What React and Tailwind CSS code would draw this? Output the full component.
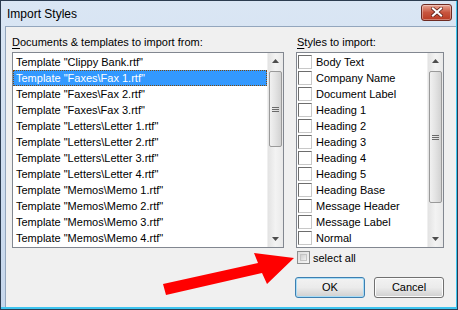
import React from "react";

const templates = [
  'Template "Clippy Bank.rtf"',
  'Template "Faxes\\Fax 1.rtf"',
  'Template "Faxes\\Fax 2.rtf"',
  'Template "Faxes\\Fax 3.rtf"',
  'Template "Letters\\Letter 1.rtf"',
  'Template "Letters\\Letter 2.rtf"',
  'Template "Letters\\Letter 3.rtf"',
  'Template "Letters\\Letter 4.rtf"',
  'Template "Memos\\Memo 1.rtf"',
  'Template "Memos\\Memo 2.rtf"',
  'Template "Memos\\Memo 3.rtf"',
  'Template "Memos\\Memo 4.rtf"',
];

const styles = [
  "Body Text",
  "Company Name",
  "Document Label",
  "Heading 1",
  "Heading 2",
  "Heading 3",
  "Heading 4",
  "Heading 5",
  "Heading Base",
  "Message Header",
  "Message Label",
  "Normal",
];

function Arrow({ up }) {
  return (
    <div className="h-[16px] flex items-center justify-center">
      <svg width="7" height="4" viewBox="0 0 7 4">
        {up ? (
          <polygon points="0,4 7,4 3.5,0" fill="#4d4d4d" />
        ) : (
          <polygon points="0,0 7,0 3.5,4" fill="#4d4d4d" />
        )}
      </svg>
    </div>
  );
}

function Scrollbar({ thumbTop, thumbHeight }) {
  return (
    <div className="w-[16px] h-full flex flex-col bg-gradient-to-r from-[#e3e3e3] via-[#f3f3f3] to-[#e9e9e9] border-l border-[#f0f0f0]">
      <Arrow up />
      <div className="flex-1 flex flex-col">
        <div style={{ height: thumbTop }} />
        <div
          className="mx-[1px] rounded-[2px] border border-[#9a9a9a] bg-gradient-to-r from-[#f1f1f1] via-[#e3e3e3] to-[#d2d2d2] flex items-center justify-center"
          style={{ height: thumbHeight }}
        >
          <div className="flex flex-col gap-[1px]">
            <div className="w-[7px] h-[1px] bg-[#6a6a6a]" />
            <div className="w-[7px] h-[1px] bg-[#6a6a6a]" />
            <div className="w-[7px] h-[1px] bg-[#6a6a6a]" />
          </div>
        </div>
      </div>
      <Arrow />
    </div>
  );
}

export default function App() {
  return (
    <div
      className="relative w-[458px] h-[310px] overflow-hidden border border-[#2c3c50] bg-gradient-to-b from-[#dae6f4] to-[#c6d7ec] text-black"
      style={{ fontFamily: '"Liberation Sans", Arial, sans-serif' }}
    >
      <div className="h-full flex flex-col border-r border-b-2 border-[#3dc4ef]">
        {/* Title bar */}
        <div className="h-[25px] flex items-center justify-between pl-[6px] pr-[4px] shrink-0">
          <span className="text-[12px] leading-none pt-[1px]">Import Styles</span>
          <div className="w-[31px] h-[17px] -mt-[3px] rounded-[3px] border border-[#6e2a22] bg-gradient-to-b from-[#e8a493] via-[#c8553e] to-[#b93a22] flex items-center justify-center shadow-[inset_0_0_0_1px_rgba(255,255,255,0.35)]">
            <svg width="12" height="10" viewBox="0 0 12 10">
              <path
                d="M2 1.5 L10 8.5 M10 1.5 L2 8.5"
                stroke="#5a1a12"
                strokeWidth="3.6"
                strokeLinecap="square"
              />
              <path
                d="M2 1.5 L10 8.5 M10 1.5 L2 8.5"
                stroke="#ffffff"
                strokeWidth="2.2"
                strokeLinecap="square"
              />
            </svg>
          </div>
        </div>

        {/* Content */}
        <div className="flex-1 ml-[4px] border-l border-t border-[#93a6bd] bg-[#f0f0f0] pl-[6px] pr-[10px] pt-[8px] text-[11px]">
          <div className="flex gap-[12px]">
            {/* Left column */}
            <div className="w-[272px] flex flex-col">
              <div className="h-[17px] leading-[14px]">
                <span className="underline underline-offset-[2px]">D</span>ocuments &amp; templates to import from:
              </div>
              <div className="h-[196px] border border-[#828790] bg-white flex">
                <div className="flex-1 pt-[1px]">
                  {templates.map((t, i) => (
                    <div
                      key={t}
                      className={
                        i === 1
                          ? "h-[16px] leading-[14px] pl-[2px] bg-[#3399ff] text-white border border-dotted border-[#7a4a10]"
                          : "h-[16px] leading-[16px] pl-[3px]"
                      }
                    >
                      {t}
                    </div>
                  ))}
                </div>
                <Scrollbar thumbTop={2} thumbHeight={76} />
              </div>
            </div>

            {/* Right column */}
            <div className="w-[148px] flex flex-col">
              <div className="h-[17px] leading-[14px] pl-[1px]">
                <span className="underline underline-offset-[2px]">S</span>tyles to import:
              </div>
              <div className="h-[196px] border border-[#828790] bg-white flex">
                <div className="flex-1 pt-[1px]">
                  {styles.map((s) => (
                    <div key={s} className="h-[16px] flex items-center pl-[1px]">
                      <div className="w-[14px] h-[14px] border-t border-l border-[#6d6d6d] border-r border-b border-r-[#c8c8c8] border-b-[#c8c8c8] bg-white shrink-0" />
                      <span className="ml-[4px] leading-[16px]">{s}</span>
                    </div>
                  ))}
                </div>
                <Scrollbar thumbTop={2} thumbHeight={132} />
              </div>
              <div className="h-[15px] flex items-center mt-[2px] pl-[1px]">
                <div className="w-[13px] h-[13px] border border-[#8e8f8f] bg-gradient-to-br from-[#dcdcdc] to-[#f6f6f6] p-[2px]">
                  <div className="w-full h-full border border-[#c4c4c4] bg-gradient-to-br from-[#cfcfcf] to-[#f0f0f0]" />
                </div>
                <span className="ml-[3px] leading-[14px]">select all</span>
              </div>
              <div className="flex gap-[9px] mt-[12px] -ml-[1px]">
                <div className="w-[71px] h-[21px] rounded-[3px] border border-[#3c7fb1] shadow-[inset_0_0_0_1px_#a8dcf6] bg-gradient-to-b from-[#f2f2f2] via-[#ebebeb] to-[#cfcfcf] flex items-center justify-center">
                  OK
                </div>
                <div className="w-[71px] h-[21px] rounded-[3px] border border-[#707070] shadow-[inset_0_0_0_1px_#fcfcfc] bg-gradient-to-b from-[#f2f2f2] via-[#ebebeb] to-[#cfcfcf] flex items-center justify-center">
                  Cancel
                </div>
              </div>
            </div>
          </div>
        </div>
      </div>

      {/* Red annotation arrow */}
      <svg
        className="absolute left-0 top-0 pointer-events-none"
        width="458"
        height="310"
        viewBox="0 0 458 310"
      >
        <polygon
          points="162,283 257,262 253,252 293,257 266,283 261,272 165,294"
          fill="#ff0000"
        />
      </svg>
    </div>
  );
}
